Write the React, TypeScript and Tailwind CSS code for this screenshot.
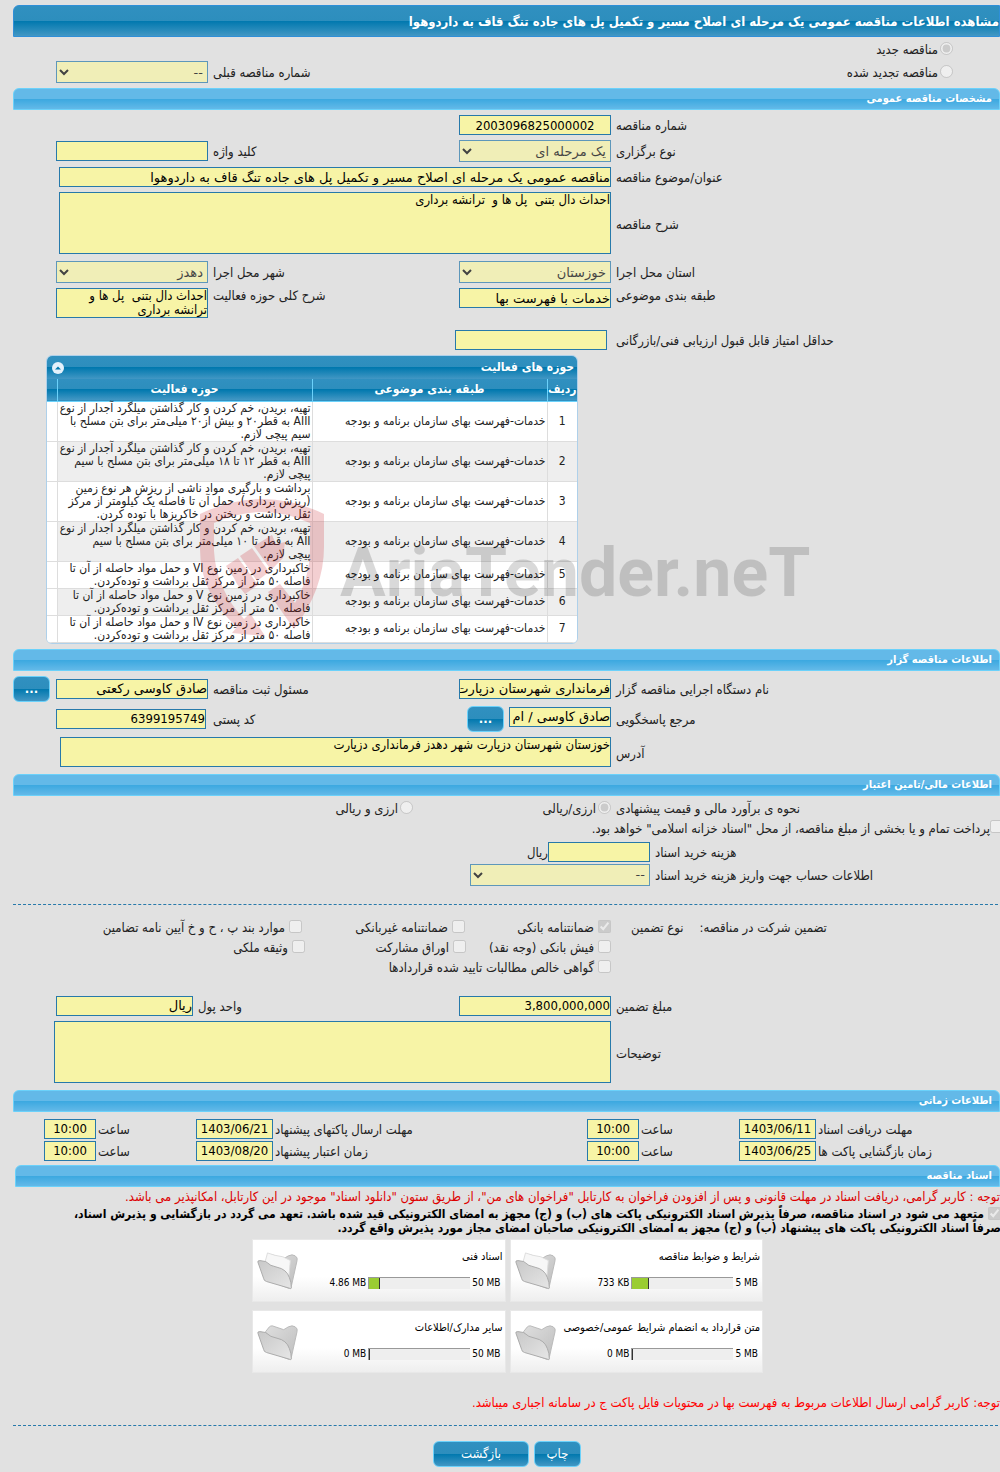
import type { ReactNode } from "react";

const boxClass = "block w-full min-w-0 h-5 border border-[#2779aa] bg-[#f7f4a6] text-[13px] leading-4 text-black outline-none";
const fieldClass = `${boxClass} font-['DejaVu_Sans',sans-serif]`;
const numberClass = `${boxClass} font-['DejaVu_Sans_Condensed','DejaVu_Sans',sans-serif]`;
const areaClass =
  "block w-full min-w-0 resize-none overflow-hidden border border-[#2779aa] bg-[#f7f4a6] text-[13px] leading-[14px] text-black outline-none";
const selectClass =
  "block w-full h-[22px] border border-[#2779aa] bg-[#f7f4a6] opacity-70 font-['DejaVu_Sans',sans-serif] text-[13px] text-black";
const darkBar =
  "bg-[linear-gradient(#3090c0_0%,#2d8ebd_50%,#0078ae_50%,#4297c4_100%)]";
const lightBar =
  "bg-[linear-gradient(#63b9e8_0%,#63b9e8_50%,#3ba8e0_50%,#63b9e8_100%)]";

const activities = [
  "تهیه، بریدن، خم کردن و کار گذاشتن میلگرد آجدار از نوع AIII به قطر۲۰ و بیش از۲۰ میلی‌متر برای بتن مسلح با سیم پیچی\u00a0لازم.",
  "تهیه، بریدن، خم کردن و کار گذاشتن میلگرد آجدار از نوع AIII به قطر ۱۲ تا ۱۸ میلی‌متر برای بتن مسلح با سیم پیچی\u00a0لازم.",
  "برداشت و بارگیری مواد ناشی از ریزش هر نوع زمین (ریزش برداری)، حمل آن تا فاصله یک کیلومتر از مرکز ثقل برداشت و ریختن در خاکریزها با توده کردن.",
  "تهیه، بریدن، خم کردن و کار گذاشتن میلگرد آجدار از نوع AII به قطر تا ۱۰ میلی‌متر برای بتن مسلح با سیم پیچی\u00a0لازم.",
  "خاکبرداری در زمین نوع VI و حمل مواد حاصله از آن تا فاصله ۵۰ متر از مرکز ثقل برداشت و توده‌کردن.",
  "خاکبرداری در زمین نوع V و حمل مواد حاصله از آن تا فاصله ۵۰ متر از مرکز ثقل برداشت و توده‌کردن.",
  "خاکبرداری در زمین نوع IV و حمل مواد حاصله از آن تا فاصله ۵۰ متر از مرکز ثقل برداشت و توده‌کردن.",
];

const folders = [
  { title: "شرایط و ضوابط مناقصه", used: "733 KB", total: "5 MB", percent: 16, full: true },
  { title: "اسناد فنی", used: "4.86 MB", total: "50 MB", percent: 11, full: true },
  { title: "متن قرارداد به انضمام شرایط عمومی/خصوصی", used: "0 MB", total: "5 MB", percent: 0, full: false },
  { title: "سایر مدارک/اطلاعات", used: "0 MB", total: "50 MB", percent: 0, full: false },
];

const SectionBar = ({ children }: { children: ReactNode }) => (
  <h2
    className={`ml-[13px] h-[22px] rounded-t-md border border-[#6bd1fa] pr-[7px] text-[11px] leading-5 font-bold text-white ${lightBar}`}
  >
    {children}
  </h2>
);

// label column, control, label column, control
const Row = ({ className = "", children }: { className?: string; children: ReactNode }) => (
  <div className={`grid grid-cols-[389fr_152px_251fr_208px] ${className}`}>{children}</div>
);

const Label = ({
  htmlFor,
  tight = false,
  className = "pt-1",
  children,
}: {
  htmlFor: string;
  tight?: boolean;
  className?: string;
  children: ReactNode;
}) => (
  <label
    htmlFor={htmlFor}
    className={`block text-left whitespace-nowrap ${tight ? "pl-0.5" : "pl-[5px]"} ${className}`}
  >
    {children}
  </label>
);

const MoreButton = ({ label }: { label: string }) => (
  <button
    type="button"
    aria-label={label}
    className={`h-[26px] w-[37px] shrink-0 rounded-md border border-[#6bd1fa] text-[13px] leading-6 font-bold text-white ${darkBar}`}
  >
    ...
  </button>
);

const Check = ({ id, checked = false, children }: { id: string; checked?: boolean; children: ReactNode }) => (
  <span className="flex items-start gap-1 whitespace-nowrap">
    <input type="checkbox" id={id} disabled defaultChecked={checked} className="size-[13px]" />
    <label htmlFor={id} className="pt-px">{children}</label>
  </span>
);

const DateField = ({ id, label, value, hour }: { id: string; label: string; value: string; hour: string }) => (
  <>
    <Label htmlFor={id} tight>{label}</Label>
    <input id={id} readOnly dir="ltr" defaultValue={value} className={`${numberClass} text-center`} />
    <Label htmlFor={`${id}-hour`} tight>ساعت</Label>
    <input id={`${id}-hour`} readOnly dir="ltr" defaultValue={hour} className={`${numberClass} text-center`} />
  </>
);

const FolderIcon = ({ full }: { full: boolean }) => (
  <svg width="44" height="40" viewBox="0 0 44 42" aria-hidden="true" className="shrink-0">
    <defs>
      <linearGradient id="folderBack" x1="0" y1="0" x2="1" y2="1">
        <stop offset="0" stopColor="#dedede" />
        <stop offset="1" stopColor="#bdbdbd" />
      </linearGradient>
      <linearGradient id="folderFront" x1="0" y1="0" x2="1" y2="1">
        <stop offset="0" stopColor="#c8c8c8" />
        <stop offset="1" stopColor="#e6e6e6" />
      </linearGradient>
    </defs>
    <path
      d="M9 9 L13 4 Q14 3 16 3 L28 7 L33 4 Q37 2 40 4 Q43 6 42 9 L36 36 Q35 39 33 38 L12 30 Z"
      fill="url(#folderBack)"
      stroke="#b8b8b8"
    />
    {full && <path d="M8 12 L11 1 Q19 4 27 5 L35 9 L33 30 L10 24 Z" fill="#f7f7f7" stroke="#dcdcdc" />}
    <path
      d="M1 11 Q0 9 3 9 L9 10 Q14 15 21 16 Q31 18 34 27 Q36 31 36 38 Q36 39 34 38 L10 31 Q7 30 7 28 Z"
      fill="url(#folderFront)"
      stroke="#a9a9a9"
    />
  </svg>
);

const Watermark = () => (
  <div
    dir="ltr"
    aria-hidden="true"
    className="pointer-events-none absolute top-[142px] left-[198px] flex w-[620px] items-start"
  >
    <svg width="130" height="150" viewBox="8 8 130 150" className="shrink-0 opacity-20">
      <g fill="#c8141e">
        <path d="M10 25 Q72 -5 134 25 V58 Q134 100 104 140 L78 103 L90 95 L105 114 Q120 88 120 60 V34 Q72 12 24 34 V62 Q26 100 54 130 L60 124 L75 147 L42 144 L47 138 Q10 105 10 60 Z" />
        <path d="M36 77 L48 69 L68 96 L55 105 L47 95 L44 89 Z" />
        <path d="M50 67 L62 59 L79 83 L67 92 Z" />
        <path d="M64 57 L82 46 L86 55 L95 53 L93 69 L81 81 Z" />
      </g>
    </svg>
    <span className="pt-9 pl-3 font-['Roboto',sans-serif] text-[68px] leading-[80px] font-bold whitespace-nowrap text-black/15">
      AriaTender.neT
    </span>
  </div>
);

const App = () => {
  return (
    <main
      dir="rtl"
      className="min-h-screen overflow-hidden bg-[#e1e1e1] pt-[5px] pb-1 font-['DejaVu_Sans_Condensed','DejaVu_Sans',sans-serif] text-[13px] leading-[14px] text-[#222]"
    >
      <h1
        className={`ml-[13px] h-8 overflow-hidden rounded-tl-md border border-[#2f8fd8] text-[13px] leading-[31px] font-bold whitespace-nowrap text-white ${darkBar}`}
      >
        مشاهده اطلاعات مناقصه عمومی یک مرحله ای اصلاح مسیر و تکمیل پل های جاده تنگ قاف به داردوهوا
      </h1>

      <div className="flex items-start gap-0.5 pt-[5px] pr-[47px]">
        <input type="radio" id="new" name="kind" disabled defaultChecked className="size-[13px]" />
        <label htmlFor="new" className="pt-px">مناقصه جدید</label>
      </div>
      <div className="mt-1 flex h-[22px] items-start pr-[47px]">
        <div className="flex flex-1 items-start gap-0.5 pt-1">
          <input type="radio" id="renewed" name="kind" disabled className="size-[13px]" />
          <label htmlFor="renewed" className="pt-px">مناقصه تجدید شده</label>
        </div>
        <Label htmlFor="previous" className="pt-[5px]">شماره مناقصه قبلی</Label>
        <div className="w-[208px] pl-14">
          <select id="previous" disabled className={selectClass}>
            <option>--</option>
          </select>
        </div>
      </div>

      <div className="mt-[5px]">
        <SectionBar>مشخصات مناقصه عمومی</SectionBar>
      </div>
      <Row className="mt-[5px]">
        <Label htmlFor="number">شماره مناقصه</Label>
        <input id="number" readOnly dir="ltr" defaultValue="2003096825000002" className={`${numberClass} text-center`} />
      </Row>
      <Row className="mt-[5px]">
        <Label htmlFor="type" className="pt-[5px]">نوع برگزاری</Label>
        <select id="type" disabled className={selectClass}>
          <option>یک مرحله ای</option>
        </select>
        <Label htmlFor="keyword" className="pt-[5px]">کلید واژه</Label>
        <div className="pt-px pl-14">
          <input id="keyword" readOnly className={fieldClass} />
        </div>
      </Row>
      <div className="mt-[5px] grid grid-cols-[389fr_611fr] gap-y-[5px]">
        <Label htmlFor="subject">عنوان/موضوع مناقصه</Label>
        <div className="pl-[59px]">
          <input
            id="subject"
            readOnly
            defaultValue="مناقصه عمومی یک مرحله ای اصلاح مسیر و تکمیل پل های جاده تنگ قاف به داردوهوا"
            className={fieldClass}
          />
        </div>
        <Label htmlFor="description" className="pt-[26px]">شرح مناقصه</Label>
        <div className="pl-[59px]">
          <textarea
            id="description"
            readOnly
            defaultValue={"احداث دال بتنی  پل ها و  ترانشه برداری"}
            className={`${areaClass} h-[62px]`}
          />
        </div>
      </div>
      <Row className="mt-[7px]">
        <Label htmlFor="province" className="pt-[5px]">استان محل اجرا</Label>
        <select id="province" disabled className={selectClass}>
          <option>خوزستان</option>
        </select>
        <Label htmlFor="city" className="pt-[5px]">شهر محل اجرا</Label>
        <div className="pl-14">
          <select id="city" disabled className={selectClass}>
            <option>دهدز</option>
          </select>
        </div>
      </Row>
      <Row className="mt-[5px]">
        <Label htmlFor="category" className="pt-px">طبقه بندی موضوعی</Label>
        <input id="category" readOnly defaultValue="خدمات با فهرست بها" className={fieldClass} />
        <Label htmlFor="field" className="pt-px">شرح کلی حوزه فعالیت</Label>
        <div className="pl-14">
          <textarea
            id="field"
            readOnly
            defaultValue={"احداث دال بتنی  پل ها و ترانشه برداری"}
            className={`${areaClass} h-[30px]`}
          />
        </div>
      </Row>
      <div className="mt-3 grid grid-cols-[389fr_611fr]">
        <Label htmlFor="score">حداقل امتیاز قابل قبول ارزیابی فنی/بازرگانی</Label>
        <div className="pr-1">
          <input id="score" readOnly className={`${fieldClass} max-w-[152px]`} />
        </div>
      </div>

      <div className="relative mt-[5px] grid grid-cols-[422fr_578fr]">
        <section className="col-start-2 ml-[46px] overflow-hidden rounded-md border border-[#aed0ea] bg-white text-xs leading-[13px]">
          <header className={`flex h-[23px] items-center justify-between pr-[3px] pl-[5px] text-white ${darkBar}`}>
            <h3 className="font-bold">حوزه های فعالیت</h3>
            <button type="button" aria-label="بستن" className="flex size-3 items-center justify-center rounded-full bg-[#e4f1fb]">
              <svg width="6" height="4" viewBox="0 0 6 4">
                <path d="M0 3.5 L3 0.5 L6 3.5 Z" fill="#0078ae" />
              </svg>
            </button>
          </header>
          <table className="w-full table-fixed border-collapse">
            <thead>
              <tr className={`h-[22px] border-b border-[#6bd1fa] text-white ${darkBar}`}>
                <th className="w-[30px] border-l border-[#6bd1fa] p-0">ردیف</th>
                <th className="w-[235px] border-l border-[#6bd1fa] p-0">طبقه بندی موضوعی</th>
                <th className="border-l border-[#6bd1fa] p-0">حوزه فعالیت</th>
                <th className="w-[10px] p-0" />
              </tr>
            </thead>
            <tbody>
              {activities.map((text, i) => (
                <tr key={text} className="border-b border-[#dddddd] odd:bg-white even:bg-[#eeeeee]">
                  <td className="border-l border-[#dddddd] p-0 text-center">{i + 1}</td>
                  <td className="border-l border-[#dddddd] py-0 pr-px pl-0 whitespace-nowrap">
                    خدمات-فهرست بهای سازمان برنامه و بودجه
                  </td>
                  <td className="border-l border-[#dddddd] py-0 pr-px pl-0">{text}</td>
                  <td className="bg-white p-0" />
                </tr>
              ))}
            </tbody>
          </table>
        </section>
        <Watermark />
      </div>

      <div className="mt-[5px]">
        <SectionBar>اطلاعات مناقصه گزار</SectionBar>
      </div>
      <Row className="mt-[5px]">
        <Label htmlFor="agency" className="pt-[7px]">نام دستگاه اجرایی مناقصه گزار</Label>
        <div className="pt-[3px]">
          <input id="agency" readOnly defaultValue="فرمانداری شهرستان دزپارت" className={fieldClass} />
        </div>
        <Label htmlFor="registrar" className="pt-[7px]">مسئول ثبت مناقصه</Label>
        <div className="flex items-start gap-1.5 pl-[13px]">
          <div className="flex-1 pt-[3px]">
            <input id="registrar" readOnly defaultValue="صادق کاوسی رکعتی" className={fieldClass} />
          </div>
          <MoreButton label="جزئیات مسئول ثبت" />
        </div>
      </Row>
      <Row className="mt-1">
        <Label htmlFor="contact" className="pt-[7px]">مرجع پاسخگویی</Label>
        <div className="flex items-start gap-[5px] pl-2">
          <div className="flex-1 pt-px">
            <input id="contact" readOnly defaultValue="صادق کاوسی / ام" className={fieldClass} />
          </div>
          <MoreButton label="جزئیات مرجع" />
        </div>
        <Label htmlFor="postal" className="pt-[7px]">کد پستی</Label>
        <div className="pt-[3px] pr-0.5 pl-14">
          <input id="postal" readOnly dir="ltr" defaultValue="6399195749" className={`${numberClass} text-right`} />
        </div>
      </Row>
      <div className="mt-[5px] grid grid-cols-[389fr_611fr]">
        <Label htmlFor="address" className="pt-2.5">آدرس</Label>
        <div className="pl-[60px]">
          <textarea
            id="address"
            readOnly
            defaultValue="خوزستان شهرستان دزپارت شهر دهدز فرمانداری دزپارت"
            className={`${areaClass} h-[30px]`}
          />
        </div>
      </div>

      <div className="mt-[7px]">
        <SectionBar>اطلاعات مالی/تامین اعتبار</SectionBar>
      </div>
      <div className="mt-[5px] grid h-[17px] grid-cols-[389fr_198fr_413fr]">
        <span className="pt-px pl-[5px] text-left">نحوه ی برآورد مالی و قیمت پیشنهادی</span>
        <span className="flex items-start gap-0.5">
          <input type="radio" id="rial" name="currency" disabled defaultChecked className="size-[13px]" />
          <label htmlFor="rial" className="pt-px">ارزی/ریالی</label>
        </span>
        <span className="flex items-start gap-0.5">
          <input type="radio" id="mixed" name="currency" disabled className="size-[13px]" />
          <label htmlFor="mixed" className="pt-px">ارزی و ریالی</label>
        </span>
      </div>
      <div className="-mr-[3px] mt-0.5 flex h-[17px] items-start">
        <input type="checkbox" id="treasury" disabled className="size-[13px]" />
        <label htmlFor="treasury" className="pt-0.5">
          پرداخت تمام و یا بخشی از مبلغ مناقصه، از محل "اسناد خزانه اسلامی" خواهد بود.
        </label>
      </div>
      <div className="mt-[5px] grid grid-cols-[350fr_180px_470fr] gap-y-0.5">
        <Label htmlFor="cost">هزینه خرید اسناد</Label>
        <div className="flex">
          <input id="cost" readOnly className={`${fieldClass} max-w-[102px]`} />
          <span className="pt-1">ریال</span>
        </div>
        <Label htmlFor="account" className="col-start-1 pt-[5px]">
          اطلاعات حساب جهت واریز هزینه خرید اسناد
        </Label>
        <select id="account" disabled className={selectClass}>
          <option>--</option>
        </select>
      </div>

      <hr className="mt-[18px] mr-0.5 ml-[13px] border-t border-dashed border-[#2779aa]" />

      <div className="mt-[15px] grid grid-cols-[389fr_611fr]">
        <div className="flex justify-end gap-4 pt-px pl-5">
          <span>تضمین شرکت در مناقصه:</span>
          <span>نوع تضمین</span>
        </div>
        <div className="flex h-5">
          <div className="w-[146px]"><Check id="bank" checked>ضمانتنامه بانکی</Check></div>
          <div className="w-[163px]"><Check id="nonbank">ضمانتنامه غیربانکی</Check></div>
          <Check id="clause">موارد بند پ ، ح و خ آیین نامه تضامین</Check>
        </div>
        <div className="col-start-2 flex h-5">
          <div className="w-[145px]"><Check id="cash">فیش بانکی (وجه نقد)</Check></div>
          <div className="w-[161px]"><Check id="bonds">اوراق مشارکت</Check></div>
          <Check id="estate">وثیقه ملکی</Check>
        </div>
        <div className="col-start-2 flex h-5">
          <Check id="claims">گواهی خالص مطالبات تایید شده قراردادها</Check>
        </div>
      </div>

      <Row className="mt-4">
        <Label htmlFor="amount">مبلغ تضمین</Label>
        <input id="amount" readOnly dir="ltr" defaultValue="3,800,000,000" className={`${numberClass} text-right`} />
        <div className="col-span-2 flex justify-end pl-14">
          <Label htmlFor="unit">واحد پول</Label>
          <input id="unit" readOnly defaultValue="ریال" className={`${fieldClass} max-w-[137px]`} />
        </div>
      </Row>
      <div className="mt-[5px] grid grid-cols-[389fr_611fr]">
        <Label htmlFor="notes" className="pt-[26px]">توضیحات</Label>
        <div className="pl-[54px]">
          <textarea id="notes" readOnly className={`${areaClass} h-[62px]`} />
        </div>
      </div>

      <div className="mt-[7px]">
        <SectionBar>اطلاعات زمانی</SectionBar>
      </div>
      <div className="mt-[7px] grid grid-cols-[184fr_77px_100fr_52px_314fr_77px_100fr_52px_44fr] gap-y-0.5">
        <DateField id="receive" label="مهلت دریافت اسناد" value="1403/06/11" hour="10:00" />
        <DateField id="send" label="مهلت ارسال پاکتهای پیشنهاد" value="1403/06/21" hour="10:00" />
        <span />
        <DateField id="open" label="زمان بازگشایی پاکت ها" value="1403/06/25" hour="10:00" />
        <DateField id="validity" label="زمان اعتبار پیشنهاد" value="1403/08/20" hour="10:00" />
      </div>

      <div className="mt-1 ml-0.5">
        <SectionBar>اسناد مناقصه</SectionBar>
      </div>
      <p className="mt-0.5 mb-0.5 leading-4 whitespace-nowrap text-[#dd0000]">
        توجه : کاربر گرامی، دریافت اسناد در مهلت قانونی و پس از افزودن فراخوان به کارتابل "فراخوان های من"، از طریق
        ستون "دانلود اسناد" موجود در این کارتابل، امکانپذیر می باشد.
      </p>
      <div className="-mr-px text-xs leading-[14px] font-bold text-black">
        <input type="checkbox" id="commit" disabled defaultChecked className="ml-1 size-[13px] align-top" />
        <label htmlFor="commit">
          متعهد می شود در اسناد مناقصه، صرفاً پذیرش اسناد الکترونیکی پاکت های (ب) و (ج) مجهز به امضای الکترونیکی قید
          شده باشد. تعهد می گردد در بازگشایی و پذیرش اسناد،
          <br />
          صرفاً اسناد الکترونیکی پاکت های پیشنهاد (ب) و (ج) مجهز به امضای الکترونیکی صاحبان امضای مجاز مورد پذیرش واقع
          گردد.
        </label>
      </div>

      <div className="mt-1 mr-[237px] grid w-[511px] grid-cols-2 gap-x-1 gap-y-2">
        {folders.map((f) => (
          <article
            key={f.title}
            className="flex h-[63px] flex-row-reverse justify-between border border-[#e8e8e8] bg-[linear-gradient(#ffffff_60%,#eeeeee)] text-[10px] text-black"
          >
            <div className="pt-3 pl-[3px]">
              <FolderIcon full={f.full} />
            </div>
            <div className="flex flex-col gap-3 pt-[10px] pr-[2px]">
              <h3 className="text-[11px] leading-[14px] whitespace-nowrap">{f.title}</h3>
              <div className="flex items-center gap-[2px] pr-[2px] whitespace-nowrap">
                <span dir="ltr">{f.total}</span>
                <div dir="ltr" className="h-3 w-[102px] border-t border-l border-[#999999] bg-[#eeeeee]">
                  <div className="h-full border-r border-[#333333] bg-[#9acd32]" style={{ width: `${f.percent}%` }} />
                </div>
                <span dir="ltr">{f.used}</span>
              </div>
            </div>
          </article>
        ))}
      </div>

      <p className="mt-[23px] leading-[14px] text-[#ff0000]">
        توجه: کاربر گرامی ارسال اطلاعات مربوط به فهرست بها در محتویات فایل پاکت ج در سامانه اجباری میباشد.
      </p>
      <hr className="mt-[15px] mr-0.5 ml-[13px] border-t border-dashed border-[#2779aa]" />
      <div className="mt-[15px] flex justify-center gap-[5px] pl-[14px]">
        <button type="button" className={`h-[26px] w-[47px] rounded-md border border-[#6bd1fa] text-white ${darkBar}`}>
          چاپ
        </button>
        <button type="button" className={`h-[26px] w-24 rounded-md border border-[#6bd1fa] text-white ${darkBar}`}>
          بازگشت
        </button>
      </div>
    </main>
  );
};

export default App;
